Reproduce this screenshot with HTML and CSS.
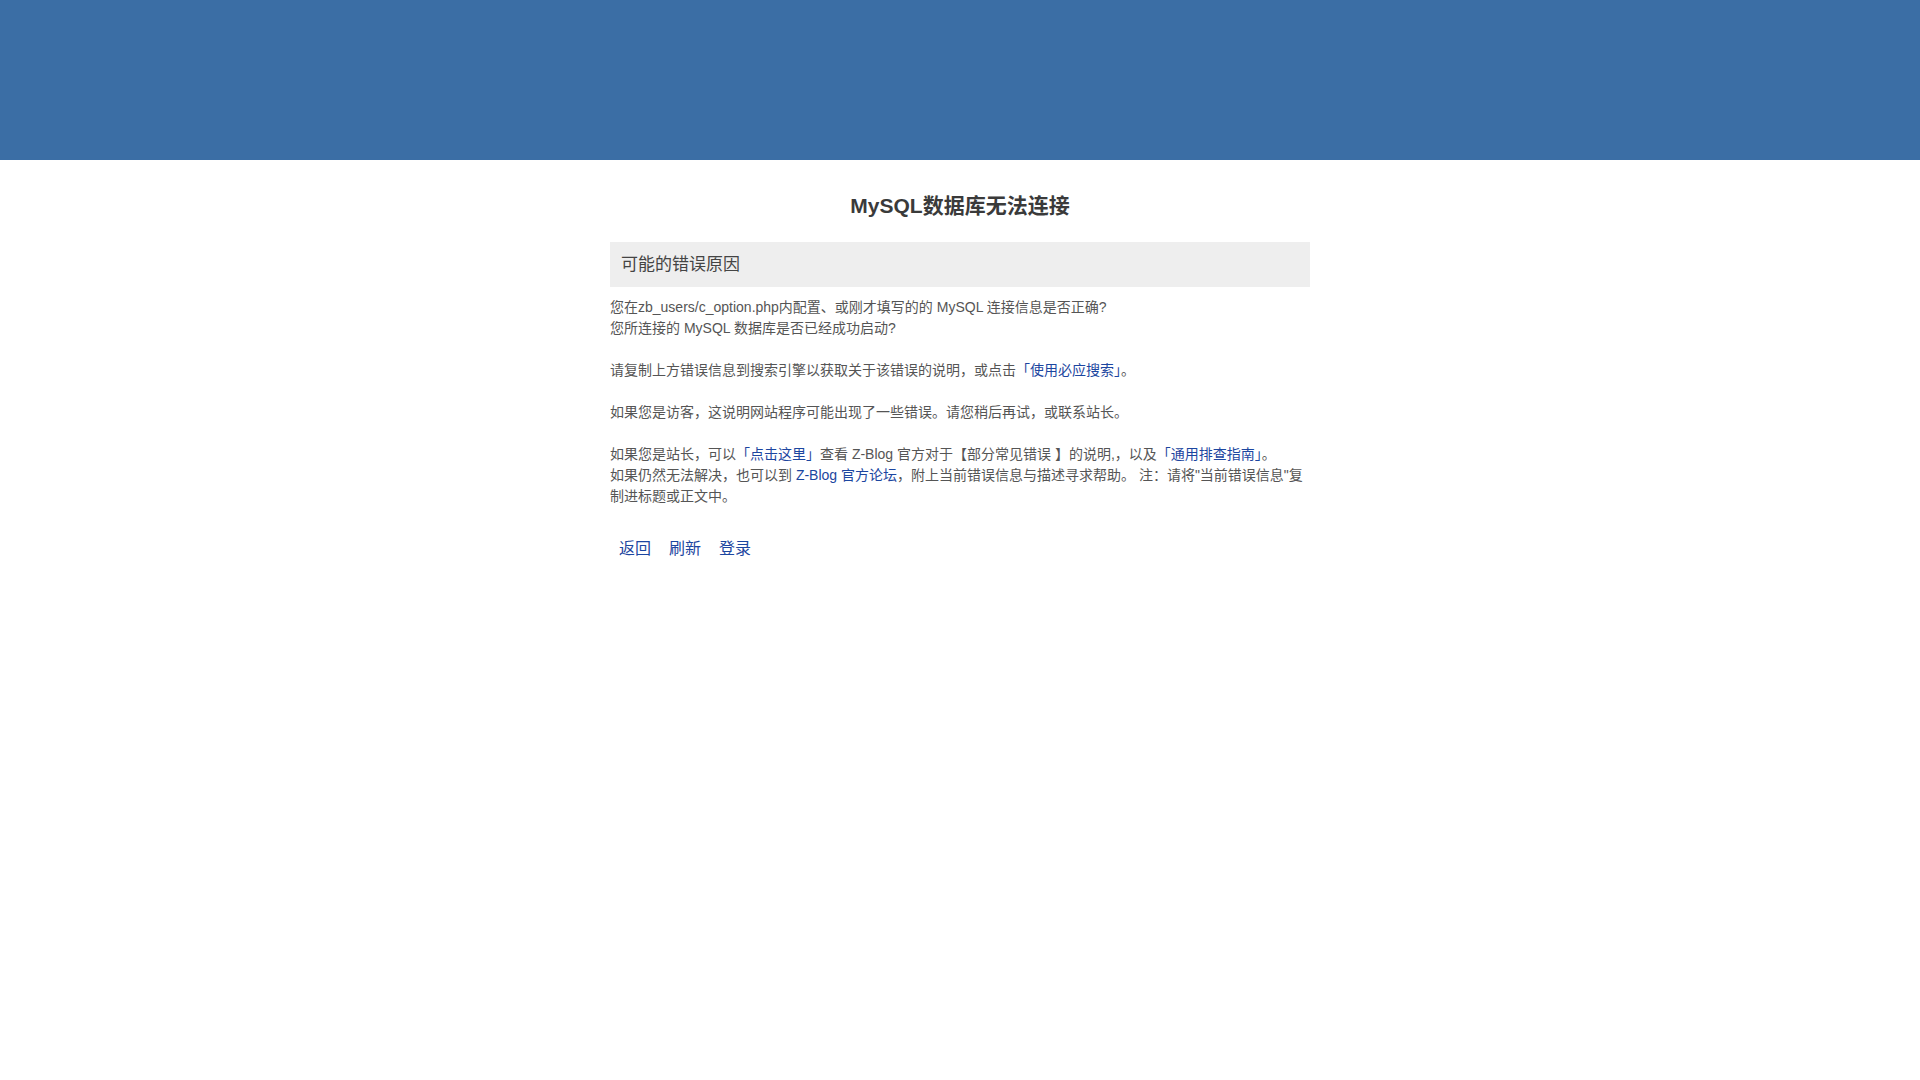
FILE: index.html
```html
<!DOCTYPE html>
<html lang="zh-CN">
<head>
<meta charset="utf-8">
<title>MySQL数据库无法连接</title>
<link rel="stylesheet" href="styles.css">
</head>
<body>
<div class="bg"></div>
<div class="wrapper">
  <h2 class="title">MySQL数据库无法连接</h2>
  <div class="reason">可能的错误原因</div>
  <div class="content">
    <p>您在zb_users/c_option.php内配置、或刚才填写的的 MySQL 连接信息是否正确?<br>您所连接的 MySQL 数据库是否已经成功启动?</p>
    <p>请复制上方错误信息到搜索引擎以获取关于该错误的说明，或点击<a href="#">「使用必应搜索」</a>。</p>
    <p>如果您是访客，这说明网站程序可能出现了一些错误。请您稍后再试，或联系站长。</p>
    <p class="last">如果您是站长，可以<a href="#">「点击这里」</a>查看 Z-Blog 官方对于【部分常见错误 】的说明,，以及<a href="#">「通用排查指南」</a>。<br>如果仍然无法解决，也可以到 <a href="#">Z-Blog 官方论坛</a>，附上当前错误信息与描述寻求帮助。 注：请将"当前错误信息"复制进标题或正文中。</p>
  </div>
  <div class="links">
    <a href="#">返回</a><a href="#">刷新</a><a href="#">登录</a>
  </div>
</div>
</body>
</html>
```

FILE: styles.css
```css
html, body {
  margin: 0;
  padding: 0;
  background: #fff;
}
body {
  font-family: "Liberation Sans", "Noto Sans CJK SC", sans-serif;
  font-size: 14px;
  color: #555;
}
.bg {
  height: 160px;
  background: #3b6ea5;
}
.wrapper {
  width: 700px;
  margin: 0 auto;
}
.title {
  margin: 0;
  padding-top: 31px;
  height: 30px;
  line-height: 30px;
  margin-bottom: 21px;
  font-size: 21px;
  font-weight: bold;
  color: #3a3a3a;
  text-align: center;
}
.reason {
  height: 45px;
  line-height: 45px;
  padding: 0 11px;
  background: #eeeeee;
  font-size: 17px;
  color: #444;
}
.content {
  margin-top: 10px;
  line-height: 21px;
}
.content p {
  margin: 0 0 21px 0;
}
.content p.last {
  margin-bottom: 0;
}
a {
  color: #1c46a0;
  text-decoration: none;
}
.links {
  margin-top: 30px;
  line-height: 24px;
  font-size: 16px;
}
.links a {
  padding: 0 9px;
}
```
